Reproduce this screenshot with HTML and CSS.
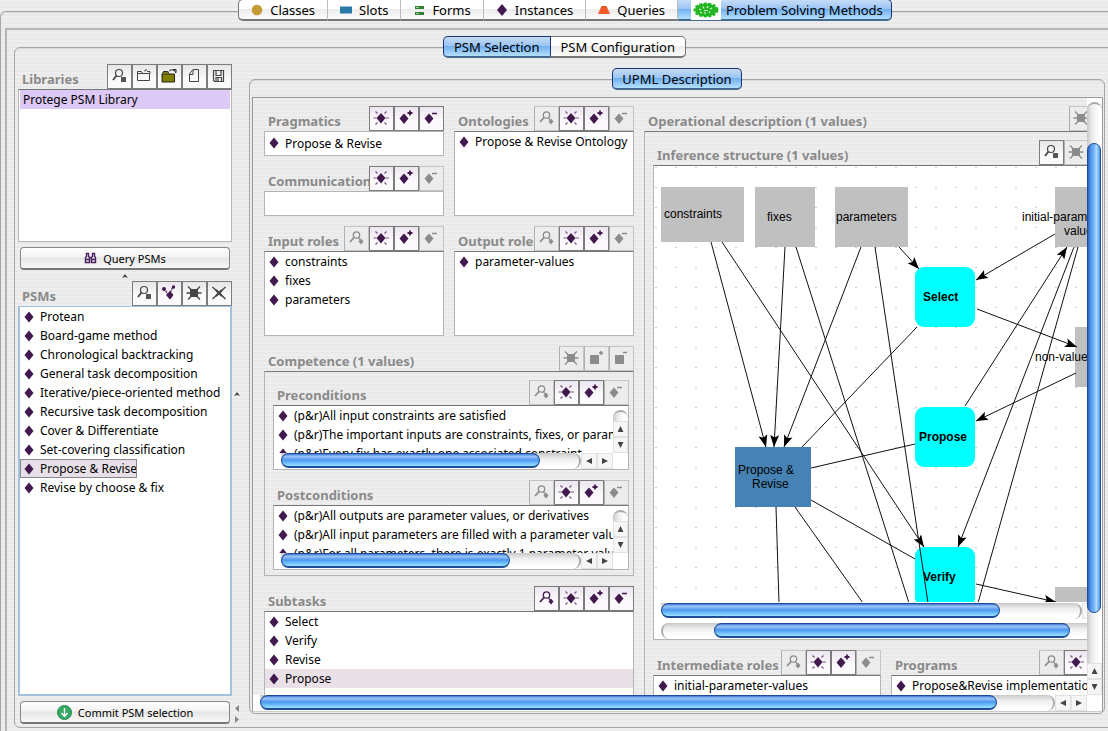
FILE: index.html
```html
<!DOCTYPE html>
<html lang="en">
<head>
<meta charset="utf-8">
<title>Problem Solving Methods</title>
<link rel="stylesheet" href="styles.css">
</head>
<body>
<svg class="defs" aria-hidden="true">
  <symbol id="diamond" viewBox="0 0 10 12"><path d="M5 0.5 9.5 6 5 11.5 0.5 6Z" fill="currentColor"/></symbol>
  <symbol id="view" viewBox="0 0 25 25"><g fill="none" stroke="currentColor"><circle cx="12.5" cy="9" r="3.2" stroke-width="1.3"/><path d="M10 11.500 6 16" stroke-width="1.800"/><path d="M14.500 12 16 14" stroke-width="1.200"/></g><path d="M17 12.500l2.500 3-2.500 3-2.500-3z" fill="currentColor"/></symbol>
  <symbol id="view-sq" viewBox="0 0 25 25"><g fill="none" stroke="currentColor"><circle cx="12" cy="9" r="3.500" stroke-width="1.200"/><path d="M9.500 11.500 6 16" stroke-width="1.800"/></g><path d="M14 13h5v5h-5z" fill="#555"/></symbol>
  <symbol id="create" viewBox="0 0 25 25"><path d="M12 7l4.500 5-4.500 5.500-4.500-5.500z" fill="currentColor"/><path d="M4.500 12H7.500M16.500 12h3.500M6.500 5.500l2 2M17.500 5.500l-2 2M6.500 18.500l2-2M17.500 18.500l-2-2" stroke="currentColor" stroke-width="1.200" opacity=".7"/></symbol>
  <symbol id="create-sq" viewBox="0 0 25 25"><path d="M8 8h8v8h-8z" fill="currentColor"/><path d="M4.500 12H8M16 12h3.500M6 5.500l3 3M18 5.500l-3 3M6 18.500l3-3M18 18.500l-3-3" stroke="currentColor" stroke-width="1.300"/></symbol>
  <symbol id="add" viewBox="0 0 25 25"><path d="M10 7.500l4.500 5-4.500 5.500-4.500-5.500z" fill="currentColor"/><path d="M13.500 7h5M16 4.500v5" stroke="currentColor" stroke-width="1.800"/></symbol>
  <symbol id="remove" viewBox="0 0 25 25"><path d="M10 7.500l4.500 5-4.500 5.500-4.500-5.500z" fill="currentColor"/><path d="M13 7.500h5" stroke="currentColor" stroke-width="1.500"/></symbol>
  <symbol id="add-sq" viewBox="0 0 25 25"><path d="M6 9h9v9h-9z" fill="currentColor"/><path d="M15 7h4M17 5v4" stroke="currentColor" stroke-width="1.500"/></symbol>
  <symbol id="remove-sq" viewBox="0 0 25 25"><path d="M6 9h9v9h-9z" fill="currentColor"/><path d="M14 6.500h4" stroke="currentColor" stroke-width="1.500"/></symbol>
  <symbol id="folder" viewBox="0 0 25 25"><path d="M5.500 9.500v7h12v-7zM5.500 9.500V7.500h4l1 2M13 7.500V6h2M15 7.500h3v2" fill="none" stroke="currentColor"/></symbol>
  <symbol id="folder-open" viewBox="0 0 25 25"><path d="M5 10h12.500v8H5zM5.500 9.500l1-2h4l1.500 2" fill="#808000" stroke="#222"/><path d="M12 7.500c1-2 3-2 4.500-1M16 5.500h3v3M17 6l2 3" fill="none" stroke="#222"/></symbol>
  <symbol id="page" viewBox="0 0 25 25"><path d="M11 5.500h5.500v12h-9V10zM11 6v4.500H7.500" fill="none" stroke="currentColor"/></symbol>
  <symbol id="floppy" viewBox="0 0 25 25"><path d="M6.500 6.500h10v11h-9l-1-1zM9 6.500v5h5v-5M9 17.500v-4h5.500v4M11 14v3" fill="none" stroke="currentColor" stroke-width="1.200"/></symbol>
  <symbol id="branch" viewBox="0 0 25 25"><path d="M7 7.500l5 7 4-9" fill="none" stroke="currentColor" stroke-width="1.200" stroke-dasharray="2 1"/><path d="M13 10.500l3 3.500-3 4-3.500-4z" fill="currentColor" stroke="currentColor"/><circle cx="7" cy="8" r="2" fill="currentColor"/><circle cx="16.500" cy="6" r="1.700" fill="currentColor"/></symbol>
  <symbol id="cross" viewBox="0 0 25 25"><path d="M5.500 6 18.500 18M18.500 6 5.500 18" stroke="currentColor" stroke-width="1.400"/><path d="M9 9l6 6M15 9l-6 6" stroke="currentColor" stroke-width="2.200"/></symbol>
</svg>

<nav class="tabs main-tabs">
  <button class="tab"><svg viewBox="0 0 12 12" width="12" height="12"><circle cx="6" cy="6" r="5.300" fill="#c59b35"/></svg>Classes</button>
  <button class="tab"><svg viewBox="0 0 12 12" width="12" height="12"><path d="M0 2.500h12v7H0z" fill="#2878a8"/></svg>Slots</button>
  <button class="tab"><svg viewBox="0 0 12 12" width="12" height="12"><path d="M2 2h9v3H2zM2 8h9v3H2z" fill="#338033"/><path d="M3 3.500h3M3 9.500h3" stroke="#9c9"/></svg>Forms</button>
  <button class="tab"><svg viewBox="0 0 12 12" width="12" height="12"><path d="M6 0l5 6-5 6-5-6z" fill="#42194f"/></svg>Instances</button>
  <button class="tab"><svg viewBox="0 0 12 12" width="12" height="12"><path d="M3.500 2h5L12 10H0z" fill="#f05a28"/></svg>Queries</button>
  <button class="tab on psm"><svg class="cell" viewBox="0 0 30 20" width="30" height="20"><path d="M0 0h30v20H0z" fill="#fff"/><ellipse cx="15" cy="10" rx="11" ry="6.500" fill="#22b522"/><ellipse cx="15" cy="10" rx="11.500" ry="6.500" fill="none" stroke="#22b522" stroke-width="2" stroke-dasharray="3 1.500"/><g stroke="#d5f5d0" stroke-width="1.200"><path d="M8 9l2 1M12 6.500l1 2M17 6l-1 2M21 8l-2 1M9 13l2-1M14 14v-2M19 13l-1-1.500M13 10.500h4"/></g></svg>Problem Solving Methods</button>
</nav>

<main class="frame frame-outer">
 <div class="pane">
  <nav class="tabs">
    <button class="tab on">PSM Selection</button>
    <button class="tab">PSM Configuration</button>
  </nav>
  <div class="frame frame-psm">
    <aside class="side">
      <section class="widget">
        <header class="head"><h2>Libraries</h2>
          <button class="ib" aria-label="View library"><svg><use href="#view-sq"/></svg></button><button class="ib" aria-label="New library"><svg><use href="#folder"/></svg></button><button class="ib" aria-label="Open library"><svg><use href="#folder-open"/></svg></button><button class="ib" aria-label="Close library"><svg><use href="#page"/></svg></button><button class="ib" aria-label="Save library"><svg><use href="#floppy"/></svg></button>
        </header>
        <ul class="list libs"><li>Protege PSM Library</li></ul>
      </section>
      <button class="push"><svg viewBox="0 0 13 12" width="13" height="12"><g fill="none" stroke="#4a2060" stroke-width="1.400"><path d="M2.500 1.500h2v3l1 1v5h-4v-5l1-1zM8.500 1.500h2v3l1 1v5h-4v-5l1-1zM1.500 7.500h4M7.500 7.500h4M5.500 5.500h2"/></g></svg>Query PSMs</button>
      <div class="split-up"><svg viewBox="0 0 6 4" width="6" height="4"><path d="M0 4 3 0l3 4-3-1z" fill="#444"/></svg></div>
      <section class="widget grow">
        <header class="head"><h2>PSMs</h2>
          <button class="ib" aria-label="View PSM"><svg><use href="#view-sq"/></svg></button><button class="ib purple" aria-label="Show hierarchy"><svg><use href="#branch"/></svg></button><button class="ib" aria-label="Create PSM"><svg><use href="#create-sq"/></svg></button><button class="ib" aria-label="Delete PSM"><svg><use href="#cross"/></svg></button>
        </header>
        <ul class="list focus">
          <li><svg class="d"><use href="#diamond"/></svg>Protean</li>
          <li><svg class="d"><use href="#diamond"/></svg>Board-game method</li>
          <li><svg class="d"><use href="#diamond"/></svg>Chronological backtracking</li>
          <li><svg class="d"><use href="#diamond"/></svg>General task decomposition</li>
          <li><svg class="d"><use href="#diamond"/></svg>Iterative/piece-oriented method</li>
          <li><svg class="d"><use href="#diamond"/></svg>Recursive task decomposition</li>
          <li><svg class="d"><use href="#diamond"/></svg>Cover &amp; Differentiate</li>
          <li><svg class="d"><use href="#diamond"/></svg>Set-covering classification</li>
          <li class="picked"><svg class="d"><use href="#diamond"/></svg>Propose &amp; Revise</li>
          <li><svg class="d"><use href="#diamond"/></svg>Revise by choose &amp; fix</li>
        </ul>
      </section>
      <button class="push"><svg viewBox="0 0 15 15" width="15" height="15"><circle cx="7.500" cy="7.500" r="7" fill="#35a866" stroke="#2a8a50"/><path d="M7.500 3v8M4.500 8l3 3.500 3-3.500" fill="none" stroke="#fff" stroke-width="1.400"/></svg>Commit PSM selection</button>
    </aside>
    <div class="splitter">
      <svg viewBox="0 0 6 4" width="6" height="4"><path d="M0 4 3 0l3 4-3-1z" fill="#444"/></svg>
      <svg class="pair" viewBox="0 0 6 20" width="6" height="20"><path d="M5 1v7L1 4.500zM1 12v7l4-3.500z" fill="#888"/></svg>
    </div>

    <div class="detail">
      <nav class="tabs"><button class="tab on">UPML Description</button></nav>
      <div class="frame frame-upml">
       <div class="scroller">
        <div class="view">
         <div class="form">
          <div class="colA">
            <div class="stack">
              <section class="widget">
                <header class="head"><h2>Pragmatics</h2><button class="ib purple" aria-label="Create"><svg><use href="#create"/></svg></button><button class="ib purple" aria-label="Add"><svg><use href="#add"/></svg></button><button class="ib purple" aria-label="Remove"><svg><use href="#remove"/></svg></button></header>
                <div class="field"><svg class="d"><use href="#diamond"/></svg>Propose &amp; Revise</div>
              </section>
              <section class="widget">
                <header class="head"><h2>Communication</h2><button class="ib purple" aria-label="Create"><svg><use href="#create"/></svg></button><button class="ib purple" aria-label="Add"><svg><use href="#add"/></svg></button><button class="ib" disabled aria-label="Remove"><svg><use href="#remove"/></svg></button></header>
                <div class="field"></div>
              </section>
            </div>
            <section class="widget">
              <header class="head"><h2>Ontologies</h2><button class="ib" disabled aria-label="View"><svg><use href="#view"/></svg></button><button class="ib purple" aria-label="Create"><svg><use href="#create"/></svg></button><button class="ib purple" aria-label="Add"><svg><use href="#add"/></svg></button><button class="ib" disabled aria-label="Remove"><svg><use href="#remove"/></svg></button></header>
              <ul class="list"><li><svg class="d"><use href="#diamond"/></svg>Propose &amp; Revise Ontology</li></ul>
            </section>
            <section class="widget">
              <header class="head"><h2>Input roles</h2><button class="ib" disabled aria-label="View"><svg><use href="#view"/></svg></button><button class="ib purple" aria-label="Create"><svg><use href="#create"/></svg></button><button class="ib purple" aria-label="Add"><svg><use href="#add"/></svg></button><button class="ib" disabled aria-label="Remove"><svg><use href="#remove"/></svg></button></header>
              <ul class="list"><li><svg class="d"><use href="#diamond"/></svg>constraints</li><li><svg class="d"><use href="#diamond"/></svg>fixes</li><li><svg class="d"><use href="#diamond"/></svg>parameters</li></ul>
            </section>
            <section class="widget">
              <header class="head"><h2>Output roles</h2><button class="ib" disabled aria-label="View"><svg><use href="#view"/></svg></button><button class="ib purple" aria-label="Create"><svg><use href="#create"/></svg></button><button class="ib purple" aria-label="Add"><svg><use href="#add"/></svg></button><button class="ib" disabled aria-label="Remove"><svg><use href="#remove"/></svg></button></header>
              <ul class="list"><li><svg class="d"><use href="#diamond"/></svg>parameter-values</li></ul>
            </section>
            <section class="widget wide">
              <header class="head"><h2>Competence (1 values)</h2><button class="ib" disabled aria-label="Create"><svg><use href="#create-sq"/></svg></button><button class="ib" disabled aria-label="Add"><svg><use href="#add-sq"/></svg></button><button class="ib" disabled aria-label="Remove"><svg><use href="#remove-sq"/></svg></button></header>
              <div class="box">
                <section class="widget">
                  <header class="head"><h2>Preconditions</h2><button class="ib" disabled aria-label="View"><svg><use href="#view"/></svg></button><button class="ib purple" aria-label="Create"><svg><use href="#create"/></svg></button><button class="ib purple" aria-label="Add"><svg><use href="#add"/></svg></button><button class="ib" disabled aria-label="Remove"><svg><use href="#remove"/></svg></button></header>
                  <div class="cond">
                    <ul><li><svg class="d"><use href="#diamond"/></svg>(p&amp;r)All input constraints are satisfied</li><li><svg class="d"><use href="#diamond"/></svg>(p&amp;r)The important inputs are constraints, fixes, or parameters</li><li><svg class="d"><use href="#diamond"/></svg>(p&amp;r)Every fix has exactly one associated constraint</li></ul>
                    <div class="sb v"><i class="track"></i><button class="ar up" aria-label="Scroll up"></button><button class="ar down" aria-label="Scroll down"></button></div>
                    <div class="sb h"><i class="track"><b class="thumb pre"></b></i><button class="ar left" aria-label="Scroll left"></button><button class="ar right" aria-label="Scroll right"></button></div>
                  </div>
                </section>
                <section class="widget">
                  <header class="head"><h2>Postconditions</h2><button class="ib" disabled aria-label="View"><svg><use href="#view"/></svg></button><button class="ib purple" aria-label="Create"><svg><use href="#create"/></svg></button><button class="ib purple" aria-label="Add"><svg><use href="#add"/></svg></button><button class="ib" disabled aria-label="Remove"><svg><use href="#remove"/></svg></button></header>
                  <div class="cond">
                    <ul><li><svg class="d"><use href="#diamond"/></svg>(p&amp;r)All outputs are parameter values, or derivatives</li><li><svg class="d"><use href="#diamond"/></svg>(p&amp;r)All input parameters are filled with a parameter value</li><li><svg class="d"><use href="#diamond"/></svg>(p&amp;r)For all parameters, there is exactly 1 parameter value</li></ul>
                    <div class="sb v"><i class="track"></i><button class="ar up" aria-label="Scroll up"></button><button class="ar down" aria-label="Scroll down"></button></div>
                    <div class="sb h"><i class="track"><b class="thumb post"></b></i><button class="ar left" aria-label="Scroll left"></button><button class="ar right" aria-label="Scroll right"></button></div>
                  </div>
                </section>
              </div>
            </section>
            <section class="widget wide">
              <header class="head"><h2>Subtasks</h2><button class="ib purple" aria-label="View"><svg><use href="#view"/></svg></button><button class="ib purple" aria-label="Create"><svg><use href="#create"/></svg></button><button class="ib purple" aria-label="Add"><svg><use href="#add"/></svg></button><button class="ib purple" aria-label="Remove"><svg><use href="#remove"/></svg></button></header>
              <ul class="list tall"><li><svg class="d"><use href="#diamond"/></svg>Select</li><li><svg class="d"><use href="#diamond"/></svg>Verify</li><li><svg class="d"><use href="#diamond"/></svg>Revise</li><li class="shade"><svg class="d"><use href="#diamond"/></svg>Propose</li></ul>
            </section>
          </div>

          <section class="widget colB">
            <header class="head"><h2>Operational description (1 values)</h2><button class="ib" disabled aria-label="Create"><svg><use href="#create-sq"/></svg></button><button class="ib" disabled aria-label="Add"><svg><use href="#add-sq"/></svg></button><button class="ib" disabled aria-label="Remove"><svg><use href="#remove-sq"/></svg></button></header>
            <div class="box">
              <section class="widget">
                <header class="head"><h2>Inference structure (1 values)</h2><button class="ib" aria-label="View"><svg><use href="#view-sq"/></svg></button><button class="ib" disabled aria-label="Create"><svg><use href="#create-sq"/></svg></button><button class="ib" disabled aria-label="Add"><svg><use href="#add-sq"/></svg></button><button class="ib" disabled aria-label="Remove"><svg><use href="#remove-sq"/></svg></button></header>
                <div class="graph">
                  <svg class="diagram" viewBox="654 166 484 436" role="img" aria-label="Inference structure diagram">
                    <defs>
                      <pattern id="dots" x="656" y="167" width="20" height="20" patternUnits="userSpaceOnUse"><path d="M0 0h1v1H0zM19 0h1v1h-1z" fill="#ccc"/></pattern>
                      <marker id="tip" viewBox="0 0 12 10" refX="12" refY="5" markerWidth="12" markerHeight="10" markerUnits="userSpaceOnUse" orient="auto"><path d="M12 5 0 0.500 2.500 5 0 9.500z"/></marker>
                    </defs>
                    <rect x="654" y="166" width="484" height="436" fill="url(#dots)"/>
                    <g fill="#c0c0c0">
                      <rect x="661" y="187" width="83" height="55"/><rect x="755" y="187" width="60" height="60"/><rect x="835" y="187" width="73" height="60"/><rect x="1055" y="187" width="74" height="60"/><rect x="1075" y="327" width="60" height="60"/><rect x="1055" y="587" width="60" height="60"/>
                    </g>
                    <rect x="735" y="447" width="76" height="60" fill="#4682b4"/>
                    <g fill="#0ff">
                      <rect x="915" y="267" width="60" height="60" rx="9"/><rect x="915" y="407" width="60" height="60" rx="9"/><rect x="915" y="547" width="60" height="60" rx="9"/>
                    </g>
                    <g stroke="#111" fill="none">
                      <line x1="722" y1="242" x2="924" y2="547" marker-end="url(#tip)"/>
                      <line x1="711" y1="242" x2="766" y2="447" marker-end="url(#tip)"/>
                      <line x1="785" y1="247" x2="774" y2="447" marker-end="url(#tip)"/>
                      <line x1="861" y1="247" x2="784" y2="447" marker-end="url(#tip)"/>
                      <line x1="899" y1="247" x2="919" y2="269" marker-end="url(#tip)"/>
                      <line x1="1055" y1="234" x2="976" y2="280" marker-end="url(#tip)"/>
                      <line x1="977" y1="309" x2="1077" y2="347" marker-end="url(#tip)"/>
                      <line x1="965" y1="406" x2="1067" y2="247" marker-end="url(#tip)"/>
                      <line x1="1074" y1="247" x2="958" y2="547" marker-end="url(#tip)"/>
                      <line x1="1076" y1="373" x2="976" y2="421" marker-end="url(#tip)"/>
                      <line x1="976" y1="584" x2="1056" y2="602" marker-end="url(#tip)"/>
                      <path d="M796 247 909 603M875 247 928 603M917 327 802 447M1078 247 978 603M811 468 915 444M811 500 915 559M776 507 779 603M795 507 863 603"/>
                    </g>
                    <g class="label">
                      <text x="664" y="218">constraints</text><text x="767" y="221">fixes</text><text x="836" y="221">parameters</text>
                      <text x="1022" y="221">initial-parameter-</text><text x="1064" y="235">values</text><text x="1035" y="361">non-values</text>
                      <text x="738" y="474">Propose &amp;</text><text x="752" y="488">Revise</text>
                    </g>
                    <g class="label strong"><text x="923" y="301">Select</text><text x="919" y="441">Propose</text><text x="923" y="581">Verify</text></g>
                  </svg>
                  <div class="sb h inner"><i class="track"><b class="thumb g1"></b></i><button class="ar left" aria-label="Scroll left"></button><button class="ar right" aria-label="Scroll right"></button></div>
                  <div class="sb h outer"><i class="track first"><b class="thumb g2"></b></i></div>
                </div>
              </section>
              <div class="pair-row">
                <section class="widget mid">
                  <header class="head"><h2>Intermediate roles</h2><button class="ib" disabled aria-label="View"><svg><use href="#view"/></svg></button><button class="ib purple" aria-label="Create"><svg><use href="#create"/></svg></button><button class="ib purple" aria-label="Add"><svg><use href="#add"/></svg></button><button class="ib" disabled aria-label="Remove"><svg><use href="#remove"/></svg></button></header>
                  <ul class="list"><li><svg class="d"><use href="#diamond"/></svg>initial-parameter-values</li></ul>
                </section>
                <section class="widget grow">
                  <header class="head"><h2>Programs</h2><button class="ib" disabled aria-label="View"><svg><use href="#view"/></svg></button><button class="ib purple" aria-label="Create"><svg><use href="#create"/></svg></button><button class="ib purple" aria-label="Add"><svg><use href="#add"/></svg></button><button class="ib" disabled aria-label="Remove"><svg><use href="#remove"/></svg></button></header>
                  <ul class="list"><li><svg class="d"><use href="#diamond"/></svg>Propose&amp;Revise implementation</li></ul>
                </section>
              </div>
            </div>
          </section>
         </div>
        </div>
        <div class="sb v"><i class="track"><b class="thumb page-v"></b></i><button class="ar up" aria-label="Scroll up"></button><button class="ar down" aria-label="Scroll down"></button></div>
        <div class="sb h"><i class="track"><b class="thumb page-h"></b></i><button class="ar left" aria-label="Scroll left"></button><button class="ar right" aria-label="Scroll right"></button></div>
       </div>
      </div>
    </div>
  </div>
 </div>
</main>
</body>
</html>
```

FILE: styles.css
```css
* { box-sizing: border-box; }
body {
  margin: 0; height: 100vh; overflow: hidden;
  display: flex; flex-direction: column;
  font: 12px/19px "Noto Sans", "Open Sans", sans-serif; color: #000;
  background: repeating-linear-gradient(#eee 0 2px, #e9e9e9 2px 4px);
}
button { font: inherit; color: inherit; padding: 0; margin: 0; }
ul { list-style: none; margin: 0; padding: 0; }
.defs { position: absolute; width: 0; height: 0; }

/* Tabs */
.tabs { display: flex; align-self: center; margin-bottom: -11px; position: relative; z-index: 1; flex: none; }
.tab {
  display: flex; align-items: center; gap: 7px; height: 22px; padding: 0 10px;
  font-size: 13px; line-height: 18px; white-space: nowrap;
  border: 1px solid #777; border-left: 0; border-right-color: #bbb; border-bottom: 2px solid #777;
  background: linear-gradient(#fff 0 45%, #ececec 50%, #fcfcfc);
}
.tab:first-child { border-left: 1px solid #777; border-radius: 5px 0 0 5px; }
.tab:last-child { border-right: 1px solid #777; border-radius: 0 5px 5px 0; }
.tab:only-child { border-radius: 5px; padding: 0 9px; }
.tab.on { background: linear-gradient(#c5dcf7, #9cc5f3 45%, #72b0f0 50%, #b4e0ff); border-color: #1d3670; border-bottom-color: #44688f; }
.main-tabs { left: 11px; margin: -1px 0 -10px; }
.main-tabs .tab { padding: 0 12px; }
.main-tabs .psm { padding: 0 8px 0 13px; gap: 5px; }

/* Nested frames */
.frame { border: 1px solid #a5a5a5; border-radius: 6px; box-shadow: inset 0 1px #d8d8d8; min-height: 0; }
.frame-outer { flex: 1; display: flex; margin-right: -21px; border-bottom: 0; padding: 16px 4px 0; border-radius: 6px 6px 0 0; }
.pane { flex: 1; min-width: 0; display: flex; flex-direction: column; border: 2px solid #b5b5b5; border-bottom: 0; padding: 6px 7px 3px; }
.frame-psm { flex: 1; display: flex; padding: 16px 9px 3px 3px; }
.side { flex: none; width: 214px; display: flex; flex-direction: column; }
.splitter { flex: none; width: 17px; display: flex; flex-direction: column; justify-content: flex-end; padding: 0 0 0 2px; gap: 308px; }
.detail { flex: 1; min-width: 0; display: flex; flex-direction: column; padding: 4px 0 10px; }
.frame-upml { flex: 1; display: flex; padding: 17px 1px 1px 2px; }

/* Widgets */
.widget { display: flex; flex-direction: column; min-width: 0; }
.grow { flex: 1; min-height: 0; }
.head { display: flex; height: 25px; flex: none; align-items: flex-end; }
h2 { flex: 1; min-width: 0; margin: 0; padding-left: 4px; overflow: hidden; white-space: nowrap; font-size: 13px; line-height: 20px; font-weight: 700; color: #8a8a8a; }
.ib { flex: none; width: 25px; height: 25px; border: 1px solid #7c7c7c; background: linear-gradient(#e6e6e6, #fafafa 60%); color: #444; display: flex; }
.ib svg { flex: none; width: 25px; height: 25px; margin: -1px; }
.ib.purple { color: #42194f; background: linear-gradient(#ece6ef, #fbf9fb 60%); }
.ib:disabled { color: #8c8c8c; border-color: #c4c4c4; border-left-color: #b0b0b0; background: #ececec; }
.d { flex: none; width: 10px; height: 12px; color: #42194f; }
.list, .field, .cond { background: #fff; border: 1px solid #b4b4b4; border-top-color: #777; }
.list { height: 85px; overflow: hidden; }
li, .field { display: flex; align-items: center; gap: 6px; padding: 0 0 0 4px; height: 19px; white-space: nowrap; }
.field { height: 25px; padding-bottom: 1px; border-color: #b4b4b4; }
.list.libs { height: 153px; }
.libs li { padding-left: 3px; margin: 0 1px; background: #dcc9f6; }
.list.focus { flex: 1; border: 2px solid #a4c2dc; border-top-width: 1px; }
.list.tall { height: 110px; }
.picked { width: max-content; background: #e8e0e8; outline: 1px solid #888; outline-offset: -1px; }
.shade { background: #eae1e8; }
.push {
  flex: none; height: 23px; margin: 5px 2px 0; display: flex; align-items: center; justify-content: center; gap: 6px;
  font-size: 11px;
  border: 1px solid #888; border-bottom: 2px solid #777; border-radius: 4px;
  background: linear-gradient(#fff, #f2f2f2 45%, #e6e6e6 50%, #f8f8f8);
}
.split-up { height: 11px; flex: none; display: flex; justify-content: center; align-items: center; }

/* Form */
.scroller { flex: 1; min-width: 0; display: grid; grid-template: minmax(0, 1fr) 16px / minmax(0, 1fr) 15px; border: 1px solid #999; border-bottom-color: #ccc; background: #fff; }
.view { overflow: hidden; background: repeating-linear-gradient(#eee 0 2px, #e9e9e9 2px 4px); }
.form { display: flex; gap: 10px; width: max-content; padding: 8px 11px; }
.colA { display: grid; grid-template-columns: 180px 180px; gap: 10px; align-content: start; }
.stack { display: grid; gap: 10px; }
.wide { grid-column: 1 / -1; }
.box { border: 1px solid #b4b4b4; border-top-color: #777; padding: 8px 4px 5px 8px; display: grid; gap: 10px; }
.cond { height: 65px; display: grid; grid-template: minmax(0, 1fr) 16px / minmax(0, 1fr) 15px; }
.cond ul { overflow: hidden; }
.colB { width: 500px; }
.graph { border: 1px solid #b4b4b4; border-top-color: #777; background: #fff; }
.diagram { display: block; width: 484px; height: 436px; }
.label { font: 12px "Liberation Sans", sans-serif; }
.strong { font-weight: 700; }
.pair-row { display: flex; gap: 10px; }
.mid { width: 228px; }

/* Scroll bars */
.sb { display: flex; background: #fff; }
.sb.v { flex-direction: column; }
.sb.h { height: 16px; padding-left: 7px; }
.track { flex: 1; min-width: 0; min-height: 0; display: flex; }
.h .track { border-radius: 0 8px 8px 0; background: linear-gradient(#c8c8c8, #eee 35%, #fff 80%); border-right: 2px solid #aaa; }
.h .track.first { border-radius: 8px 0 0 8px; border-right: 0; border-left: 2px solid #aaa; }
.v .track { border-radius: 8px 8px 0 0; margin-top: 4px; background: linear-gradient(90deg, #c8c8c8, #eee 35%, #fff 80%); border-top: 2px solid #aaa; }
.thumb { border: 1px solid #1f4c98; border-radius: 8px; flex: none; }
.h .thumb { height: 15px; border-bottom-width: 2px; background: linear-gradient(#3f7cd4, #9cc4f8 20%, #4d97ee 50%, #66b8fa 70%, #9ee4ff); }
.v .thumb { width: 14px; background: linear-gradient(90deg, #2a62c0, #5598ee 25%, #74b4f8 50%, #b0dcff 70%, #4f96e8); }
.pre { width: 87%; }
.post { width: 77%; }
.g1 { width: 81%; }
.g2 { width: 356px; margin-left: 51px; }
.page-h { width: 93%; }
.page-v { height: 84%; margin-top: 39px; }
.graph .inner { margin: 1px 24px 0 0; }
.graph .outer { margin-top: 4px; }
.ar { flex: none; width: 16px; height: 16px; border: 1px solid #e2e2e2; background: #f6f6f6; display: flex; align-items: center; justify-content: center; }
.v .ar { width: 15px; }
.ar::before { content: ""; width: 6px; height: 6px; background: #444; }
.up::before { clip-path: polygon(50% 0, 100% 100%, 0 100%); }
.down::before { clip-path: polygon(0 0, 100% 0, 50% 100%); }
.left::before { clip-path: polygon(0 50%, 100% 0, 100% 100%); }
.right::before { clip-path: polygon(0 0, 100% 50%, 0 100%); }
```
